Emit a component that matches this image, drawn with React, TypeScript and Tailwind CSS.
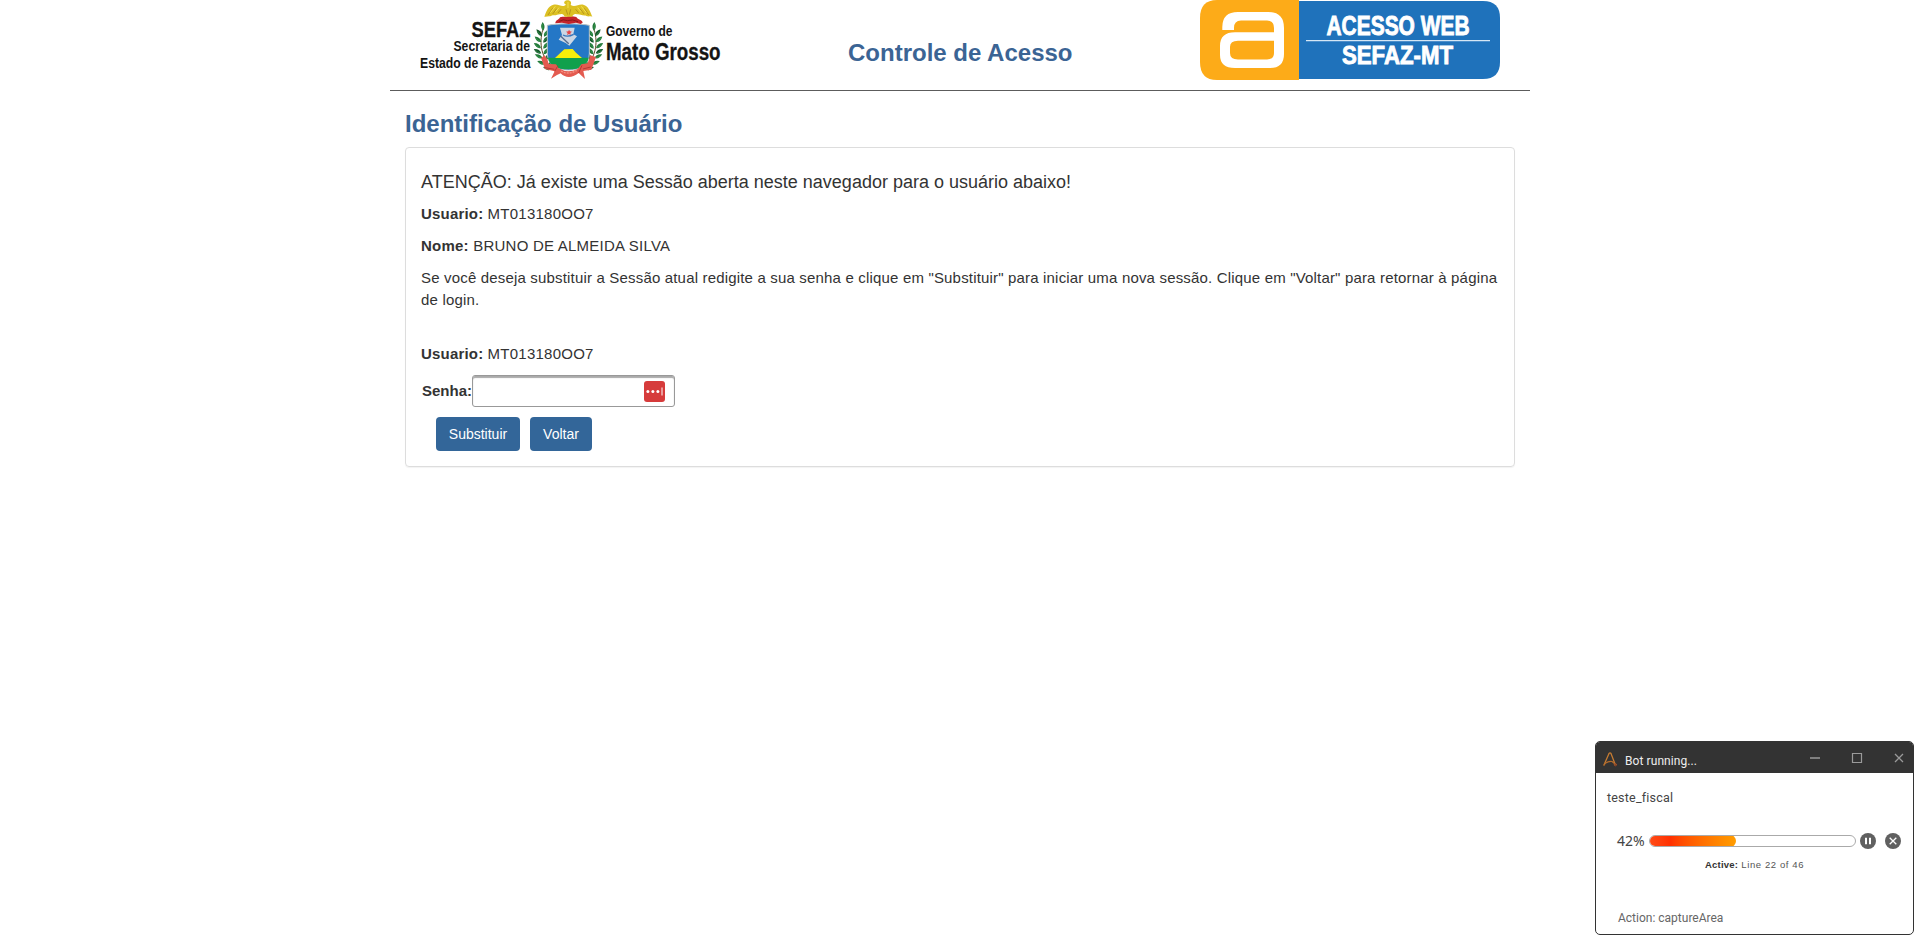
import React from "react";

const LEAVES: [number, number, number][] = [
  [40, 92, -95], [36, 108, -130], [42, 110, -55], [34, 126, -140], [40, 128, -50],
  [33, 144, -145], [40, 146, -50], [34, 160, -150], [41, 163, -50], [38, 174, -155],
  [46, 180, -55], [46, 192, -160], [58, 202, -70], [64, 208, -165],
];

function Branch() {
  return (
    <g>
      <path d="M40 84 C28 120 28 165 68 208" fill="none" stroke="#5d4a26" strokeWidth="3" />
      {LEAVES.map(([x, y, r], i) => (
        <g key={i} transform={`translate(${x} ${y}) rotate(${r})`}>
          <path d="M0 0 Q10 -11 26 0 Q12 10 0 0Z" fill={i % 3 === 1 ? "#15572b" : "#22793a"} />
          <path d="M5 -1 Q12 -4 20 -1" fill="none" stroke="#3f9a50" strokeWidth="2" />
        </g>
      ))}
    </g>
  );
}

function CoatOfArms() {
  return (
    <g transform="translate(110 0) scale(0.33333)">
      <Branch />
      <g transform="translate(231 0) scale(-1 1)">
        <Branch />
      </g>
      <path d="M52 76 C78 70 150 70 178 76 V160 C178 194 150 210 115 210 C80 210 52 194 52 160Z" fill="#2477c6" stroke="#b9c2c4" strokeWidth="3" />
      <path d="M54 173 H176 C172 198 148 208 115 208 C84 208 58 198 54 173Z" fill="#10a04c" />
      <path d="M75 174 L94 156 L103 148 L128 147 L138 158 L156 174Z" fill="#f7ef0a" />
      <path d="M90 83 H134 L130 103 L141 109 L118 137 L107 129 L86 119 L96 105Z" fill="#cbd6e4" />
      <path d="M91 107 L116 131" stroke="#536b90" strokeWidth="4" />
      <path d="M99 105 Q113 113 131 103" fill="none" stroke="#3977ba" strokeWidth="4" />
      <path d="M117 89 l3 5 6 1-5 4 1 6-5-3-6 3 2-6-5-4 7-1Z" fill="#e54545" />
      <path d="M76 70 C76 60 87 60 90 52 C98 47 103 53 114 49 C127 48 133 51 139 51 C144 60 156 58 158 68 L152 72 L138 68 L116 72 L96 68Z" fill="#c4242b" />
      <path d="M88 64 Q100 56 112 62 Q128 56 144 65" fill="none" stroke="#8b181c" strokeWidth="3" />
      <path d="M108 14 C99 10 102 3 111 1 C121 0 126 7 122 15 C135 24 145 11 160 14 C176 19 180 34 187 50 C179 48 176 50 172 49 C166 45 162 47 157 46 C150 43 146 44 140 43 C134 40 130 44 126 50 H104 C101 43 97 40 91 43 C84 42 80 46 74 46 C69 45 65 47 60 49 C54 48 49 51 43 50 C49 33 54 19 70 14 C86 10 96 24 108 14Z" fill="#dcc023" />
      <path d="M54 45 L68 25 M68 42 L80 26 M84 39 L93 28 M176 45 L163 25 M162 42 L150 26 M146 39 L137 28 M108 28 L113 44 M122 28 L118 44" fill="none" stroke="#b6951b" strokeWidth="3" />
      <path d="M61 38 L76 19 M77 35 L87 23 M169 38 L154 19 M153 35 L143 23 M114 6 V24" stroke="#f3e152" strokeWidth="3" />
      <path d="M44 166 L33 174 L45 207 L74 214 L63 236 L81 225 L92 220 Q115 243 146 219 L165 237 L160 213 L184 209 L198 171 L181 166 L173 190 L154 193 L143 207 Q114 222 86 205 L78 193 L56 192 L52 178Z" fill="#e45b50" />
      <path d="M74 214 L84 197 M146 219 L156 196 M45 203 L73 208 M182 201 L159 207" stroke="#b63a34" strokeWidth="3" />
      <path d="M93 213 Q115 226 140 211" fill="none" stroke="#f39182" strokeWidth="4" strokeDasharray="6 3" />
    </g>
  );
}

function GovernmentLogo() {
  return (
    <svg width="301" height="82" viewBox="0 0 301 82" className="shrink-0 overflow-visible" fontFamily="'Liberation Sans', Arial, sans-serif" fontWeight="700" fill="#141414">
      <text x="51.5" y="36.5" fontSize="22.5" textLength="59" lengthAdjust="spacingAndGlyphs" stroke="#141414" strokeWidth="0.3">SEFAZ</text>
      <text x="33.5" y="51" fontSize="14.5" textLength="76.5" lengthAdjust="spacingAndGlyphs">Secretaria de</text>
      <text x="0" y="68" fontSize="14.5" textLength="110.5" lengthAdjust="spacingAndGlyphs">Estado de Fazenda</text>
      <CoatOfArms />
      <text x="186" y="36" fontSize="14.5" textLength="66.5" lengthAdjust="spacingAndGlyphs">Governo de</text>
      <text x="186" y="59.5" fontSize="23" textLength="114.5" lengthAdjust="spacingAndGlyphs" stroke="#141414" strokeWidth="0.3">Mato Grosso</text>
    </svg>
  );
}

function AccessLogo() {
  return (
    <svg width="300" height="80" viewBox="0 0 300 80" className="shrink-0 overflow-visible" fontFamily="'Liberation Sans Narrow', 'Liberation Sans', sans-serif" fontWeight="700">
      <path d="M98 1 H283 Q300 1 300 18 V62 Q300 79 283 79 H98Z" fill="#1f72bb" />
      <path d="M17 0 H99 V80 H17 Q0 80 0 62 V18 Q0 0 17 0Z" fill="#fdab18" />
      <path
        fillRule="evenodd"
        fill="#fff"
        d="M22.3 30 V27 Q22.3 12 38 12 H68 Q84 12 84 28 V54 Q84 68 70 68 H35 Q20 68 20 55 V46 Q20 32.3 35 32.3 H74 V28 Q74 20.5 67 20.5 H41 Q34 20.5 34 28 V30Z M74 40.7 H38 Q30 40.7 30 47 V53 Q30 59.5 38 59.5 H67 Q74 59.5 74 53Z"
      />
      <path d="M106 40.7 H290" stroke="#d6e7f5" strokeWidth="1.2" />
      <g fill="#fff" stroke="#fff" strokeWidth="0.9">
        <text x="126.5" y="35.3" fontSize="27" textLength="143" lengthAdjust="spacingAndGlyphs">ACESSO WEB</text>
        <text x="142" y="64" fontSize="26.5" textLength="111" lengthAdjust="spacingAndGlyphs">SEFAZ-MT</text>
      </g>
    </svg>
  );
}

function UserLine() {
  return (
    <p className="whitespace-nowrap leading-[22px]">
      <b className="tracking-[0.19px]">Usuario:</b> <span className="tracking-[0.25px]">MT013180OO7</span>
    </p>
  );
}

function BotWindow() {
  return (
    <aside className="absolute left-[1595px] top-[741px] flex h-[194px] w-[319px] flex-col overflow-hidden rounded-[5px] border border-[#333] bg-white font-['Roboto',sans-serif] text-[#444]">
      <div className="flex h-[31px] shrink-0 items-center bg-[#333] pl-[7px] pr-[8px]">
        <svg width="14" height="15" viewBox="0 0 14 15" fill="none" strokeLinecap="round" strokeLinejoin="round" className="mt-1">
          <path d="M1 13 L6 1.5 Q7 .2 8 1.5 L12 12" stroke="#c57b32" strokeWidth="1.3" />
          <path d="M1 13 Q4 9 9 9.5 L12 12" stroke="#b06a2c" strokeWidth="1.2" />
          <circle cx="12.4" cy="12.7" r="1.1" stroke="#a64e27" />
        </svg>
        <span className="ml-2 mt-1.5 text-[12px] leading-4 tracking-[0.08px] text-[#eee]">Bot running...</span>
        <svg width="96" height="14" viewBox="0 0 96 14" fill="none" stroke="#9a9a9a" className="ml-auto mt-px">
          <path d="M1 7 H11" strokeWidth="1.5" />
          <path d="M43.5 2.5 H52.5 V11.5 H43.5Z" strokeWidth="1.2" />
          <path d="M86 3 L94 11 M94 3 L86 11" strokeWidth="1.3" />
        </svg>
      </div>
      <p className="ml-[11px] mt-[17px] w-fit text-[12.5px] leading-4 tracking-[0.2px]">teste_fiscal</p>
      <div className="ml-[21px] mt-[27px] flex h-4 items-center">
        <span className="w-8 font-['Noto_Sans',sans-serif] text-[14px] leading-4">42%</span>
        <div className="h-3 w-[207px] overflow-hidden rounded-full border border-[#aaa] bg-white">
          <div className="-ml-px -mt-px h-3 w-[87px] rounded-full bg-linear-to-r from-[#ff4b16] via-[#ff3000] via-25% to-[#ff9d00]" />
        </div>
        <svg width="42" height="16" viewBox="0 0 42 16" className="ml-1">
          <circle cx="8" cy="8" r="8" fill="#606060" />
          <path d="M6 4.7 V11.3 M10 4.7 V11.3" stroke="#fff" strokeWidth="2" />
          <circle cx="33" cy="8" r="8" fill="#606060" />
          <path d="M29.7 4.7 L36.3 11.3 M36.3 4.7 L29.7 11.3" stroke="#fff" strokeWidth="1.3" />
        </svg>
      </div>
      <p className="ml-[109px] mt-[10px] w-fit whitespace-nowrap font-['Liberation_Sans',sans-serif] text-[9.5px] leading-3 tracking-[0.6px] text-[#555]">
        <b className="tracking-[0.2px] text-[#333]">Active:</b> Line 22 of 46
      </p>
      <p className="ml-[22px] mt-[39px] w-fit whitespace-nowrap text-[12px] leading-4 text-[#666]">Action: captureArea</p>
    </aside>
  );
}

export default function App() {
  return (
    <div className="relative h-[937px] w-[1916px] overflow-hidden bg-white font-['Liberation_Sans',Arial,sans-serif] text-[15px] text-[#333]">
      <div className="ml-[390px] w-[1140px]">
        <header className="flex h-[91px] items-start border-b border-[#5c5c5c] pl-[30px]">
          <GovernmentLogo />
          <h1 className="ml-[127px] mt-[38px] w-[352px] text-[24px] leading-[30px] font-bold text-[#3b6494]">Controle de Acesso</h1>
          <AccessLogo />
        </header>
        <main className="px-[15px] pt-[18px]">
          <h2 className="text-[24px] leading-[30px] font-bold text-[#3b6494]">Identificação de Usuário</h2>
          <section className="mt-2 h-[320px] rounded border border-[#ddd] px-[15px] pt-[23px] shadow-[0_1px_1px_rgba(0,0,0,0.05)]">
            <p className="w-fit whitespace-nowrap text-[18px] leading-[22px]">ATENÇÃO: Já existe uma Sessão aberta neste navegador para o usuário abaixo!</p>
            <div className="mt-[10px]"><UserLine /></div>
            <p className="mt-[10px] w-fit whitespace-nowrap leading-[22px] tracking-[0.23px]"><b>Nome:</b> BRUNO DE ALMEIDA SILVA</p>
            <p className="mt-[10px] w-fit whitespace-nowrap leading-[22px] tracking-[0.175px]">
              Se você deseja substituir a Sessão atual redigite a sua senha e clique em "Substituir" para iniciar uma nova sessão. Clique em "Voltar" para retornar à página<br />de login.
            </p>
            <div className="mt-[32px]"><UserLine /></div>
            <div className="mt-[10px] flex items-center">
              <label htmlFor="senha" className="w-[51px] pl-px font-bold">Senha:</label>
              <div className="flex h-[32px] w-[203px] items-center rounded-[3px] border border-[#999] pr-[9px] shadow-[inset_0_2px_1px_#aaa]">
                <input id="senha" type="password" className="min-w-0 flex-1 bg-transparent outline-none" />
                <svg width="21" height="21" viewBox="0 0 21 21">
                  <rect width="21" height="21" rx="3" fill="#d63b3b" />
                  <circle cx="3.9" cy="10.5" r="1.5" fill="#fff" />
                  <circle cx="8.9" cy="10.5" r="1.5" fill="#fff" />
                  <circle cx="13.9" cy="10.5" r="1.5" fill="#fff" />
                  <path d="M18 6.5 V14.5" stroke="#fff" />
                </svg>
              </div>
            </div>
            <div className="ml-[15px] mt-[10px] flex gap-[10px] text-[14px] text-white">
              <button className="h-[34px] w-[84px] rounded bg-[#336699]">Substituir</button>
              <button className="h-[34px] w-[62px] rounded bg-[#336699]">Voltar</button>
            </div>
          </section>
        </main>
      </div>
      <BotWindow />
    </div>
  );
}
